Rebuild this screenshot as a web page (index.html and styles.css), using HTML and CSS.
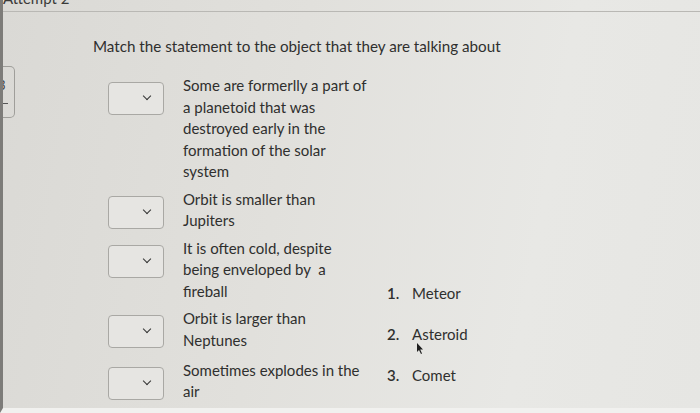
FILE: index.html
```html
<!DOCTYPE html>
<html lang="en">
<head>
    <meta charset="UTF-8">
    <title>Attempt 2</title>
    <link rel="stylesheet" href="styles.css">
</head>
<body>
    <div class="screen">
        <div class="topbar"><span class="attempt">Attempt 2</span></div>

        <div class="page">
            <div class="side">
                <div class="side-tab"><span class="side-num">3</span><span class="side-dash"></span></div>
            </div>

            <div class="question">
                <p class="prompt">Match the statement to the object that they are talking about</p>

                <div class="match">
                    <div class="statements">
                        <div class="row">
                            <div class="select"><span class="chev"></span></div>
                            <div class="text">Some are formerlly a part of a planetoid that was destroyed early in the formation of the solar system</div>
                        </div>
                        <div class="row">
                            <div class="select"><span class="chev"></span></div>
                            <div class="text">Orbit is smaller than Jupiters</div>
                        </div>
                        <div class="row">
                            <div class="select"><span class="chev"></span></div>
                            <div class="text">It is often cold, despite being enveloped by&nbsp; a fireball</div>
                        </div>
                        <div class="row">
                            <div class="select"><span class="chev"></span></div>
                            <div class="text">Orbit is larger than Neptunes</div>
                        </div>
                        <div class="row last">
                            <div class="select"><span class="chev"></span></div>
                            <div class="text">Sometimes explodes in the air</div>
                        </div>
                    </div>

                    <ol class="choices">
                        <li><span class="num">1.</span>Meteor</li>
                        <li><span class="num">2.</span>Asteroid
                            <svg class="cursor" width="8" height="12" viewBox="0 0 8 12"><path d="M1 0 L1 9 L3 7 L5 11 L6 10.5 L4.2 6.6 L7 6.4 Z" fill="#1e1e1e"/></svg>
                        </li>
                        <li><span class="num">3.</span>Comet</li>
                    </ol>
                </div>
            </div>
        </div>
    </div>
</body>
</html>
```

FILE: styles.css
```css
:root {
    --ink: #2f2f2e;
    --line: #a9a8a4;
}

body {
    margin: 0;
    font-family: Lato, "Open Sans", sans-serif;
    color: var(--ink);
    background: #e2e1dd;
}

.screen {
    width: 700px;
    height: 413px;
    overflow: hidden;
    box-sizing: border-box;
    border-left: 3px solid #7d7c79;
    border-bottom: 5px solid #f1f1ef;
    background: linear-gradient(100deg, #dad9d5 0%, #e1e0dc 40%, #e8e8e5 75%, #e6e6e3 100%);
}

/* Top strip, cut off by the photo */
.topbar {
    height: 11px;
    border-bottom: 1px solid #b9b8b4;
    overflow: hidden;
}

.attempt {
    display: block;
    margin-top: -12px;
    font-size: 15px;
    line-height: 20px;
    color: #3a3a39;
}

.page {
    display: flex;
}

.side {
    width: 12px;
    padding-top: 54px;
}

.side-tab {
    height: 50px;
    border: 1px solid #9f9e9a;
    border-left: none;
    border-radius: 0 5px 5px 0;
    display: flex;
    flex-direction: column;
    justify-content: center;
    gap: 14px;
    overflow: hidden;
}

.side-num {
    font-size: 13px;
    line-height: 8px;
    margin-left: -5px;
    color: #444;
}

.side-dash {
    width: 5px;
    height: 1px;
    background: #555;
}

/* Question body */
.question {
    padding-left: 78px;
}

.prompt {
    margin: 23px 0 0;
    font-size: 15.2px;
    line-height: 22px;
}

.match {
    display: flex;
    margin-top: 18px;
}

.statements {
    padding-left: 15px;
    display: flex;
    flex-direction: column;
    gap: 6px;
}

.row {
    display: flex;
    gap: 19px;
    align-items: flex-start;
}

.row.last {
    margin-top: 2.5px;
}

.select {
    width: 54px;
    height: 31px;
    margin-top: 7px;
    border: 1px solid var(--line);
    border-radius: 4px;
    background: #e6e5e2;
    position: relative;
    flex-shrink: 0;
}

.chev {
    position: absolute;
    right: 13px;
    top: 10px;
    width: 5px;
    height: 5px;
    border-right: 1.6px solid #333;
    border-bottom: 1.6px solid #333;
    transform: rotate(45deg);
}

.text {
    width: 184px;
    font-size: 15px;
    line-height: 21.5px;
}

.choices {
    list-style: none;
    margin: 0 0 17px 20px;
    padding: 0;
    align-self: flex-end;
    display: flex;
    flex-direction: column;
    gap: 20px;
    font-size: 15px;
    line-height: 21px;
}

.choices li {
    position: relative;
}

.num {
    display: inline-block;
    width: 25px;
    font-weight: 600;
}

.cursor {
    position: absolute;
    left: 29px;
    top: 19px;
}
```
